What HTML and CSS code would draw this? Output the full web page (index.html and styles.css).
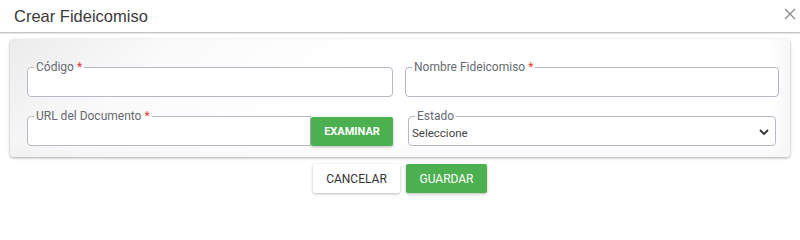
FILE: index.html
```html
<!DOCTYPE html>
<html lang="es">
<head>
<meta charset="utf-8">
<title>Crear Fideicomiso</title>
<link rel="stylesheet" href="styles.css">
</head>
<body>
<div class="modal">
  <div class="modal-header">
    <h1 class="modal-title">Crear Fideicomiso</h1>
    <button class="close" type="button" aria-label="Cerrar">
      <svg width="12" height="12" viewBox="0 0 12 12"><path d="M1 1L11 11M11 1L1 11" stroke="#8a8a8a" stroke-width="1.3" fill="none"/></svg>
    </button>
  </div>
  <div class="card">
    <div class="grid">
      <fieldset class="field">
        <legend>Código <span class="req">*</span></legend>
        <input class="input" type="text">
      </fieldset>
      <fieldset class="field">
        <legend>Nombre Fideicomiso <span class="req">*</span></legend>
        <input class="input" type="text">
      </fieldset>
      <div class="group">
        <fieldset class="field grow">
          <legend>URL del Documento <span class="req">*</span></legend>
          <input class="input" type="text">
        </fieldset>
        <button class="btn btn-green btn-examinar" type="button">EXAMINAR</button>
      </div>
      <fieldset class="field select-field">
        <legend>Estado</legend>
        <div class="select">
          <span>Seleccione</span>
          <svg width="10" height="6" viewBox="0 0 10 6"><path d="M1 1L5 5L9 1" stroke="#333" stroke-width="1.8" fill="none"/></svg>
        </div>
      </fieldset>
    </div>
  </div>
  <div class="actions">
    <button class="btn btn-white" type="button">CANCELAR</button>
    <button class="btn btn-green btn-save" type="button">GUARDAR</button>
  </div>
</div>
</body>
</html>
```

FILE: styles.css
```css
* { box-sizing: border-box; }
html, body { margin: 0; padding: 0; background: #fff; }
body { font-family: Roboto, "Liberation Sans", Arial, sans-serif; }

.modal { width: 800px; height: 204px; }

.modal-header {
  height: 33px;
  display: flex;
  align-items: center;
  justify-content: space-between;
  padding: 0 4px 0 14px;
  border-bottom: 1px solid #c6c6c6;
  box-shadow: 0 1px 0 #e4e4e4;
}
.modal-title {
  margin: 0;
  font-family: "Liberation Sans", Arial, sans-serif;
  font-weight: normal;
  font-size: 16.5px;
  line-height: 32px;
  color: #3a3a3a;
}
.close {
  border: 0;
  background: none;
  padding: 0;
  width: 12px;
  height: 12px;
  margin-top: -4px;
  display: flex;
}

.card {
  margin: 6px 10px 0;
  padding: 21px 12px 11px 17px;
  border-radius: 4px;
  background: linear-gradient(135deg, #ececec 0%, #fafafa 18%, #fff 40%);
  box-shadow: 0 1px 3px rgba(0,0,0,0.35), inset -10px -6px 14px rgba(0,0,0,0.035);
}

.grid {
  display: grid;
  grid-template-columns: 366px 374px;
  column-gap: 12px;
  row-gap: 12px;
}

.field {
  margin: 0;
  padding: 0 3px;
  min-width: 0;
  border: 1px solid #b4bac3;
  border-radius: 4px;
  background: #fff;
}
.field legend {
  margin-left: 3px;
  padding: 0 2px;
  font-size: 12px;
  line-height: 14px;
  color: #666a70;
}
.req { color: #e53935; }

.input {
  display: block;
  width: 100%;
  height: 22px;
  border: 0;
  outline: none;
  background: transparent;
  font: inherit;
}

.group { display: flex; align-items: flex-end; }
.grow { flex: 1; border-top-right-radius: 0; border-bottom-right-radius: 0; }

.select-field { margin: 0 3px 0 3px; }
.select {
  height: 21px;
  display: flex;
  align-items: center;
  justify-content: space-between;
  padding: 0 3px 2px 0;
  font-size: 11.5px;
  color: #444;
}
.select svg { margin-top: -1px; }

.btn {
  border: 0;
  border-radius: 2px;
  font-family: Roboto, "Liberation Sans", Arial, sans-serif;
  height: 29px;
  padding: 0;
  cursor: pointer;
  box-shadow: 0 1px 3px rgba(0,0,0,0.28);
}
.btn-green { background: #4caf50; color: #fff; }
.btn-examinar {
  width: 82px;
  font-size: 11px;
  font-weight: 700;
}
.btn-white { background: #fff; color: #333; width: 87px; font-size: 12px; }
.btn-save { width: 81px; font-size: 12px; font-weight: 400; }

.actions {
  display: flex;
  justify-content: center;
  gap: 6px;
  margin-top: 7px;
}
```
